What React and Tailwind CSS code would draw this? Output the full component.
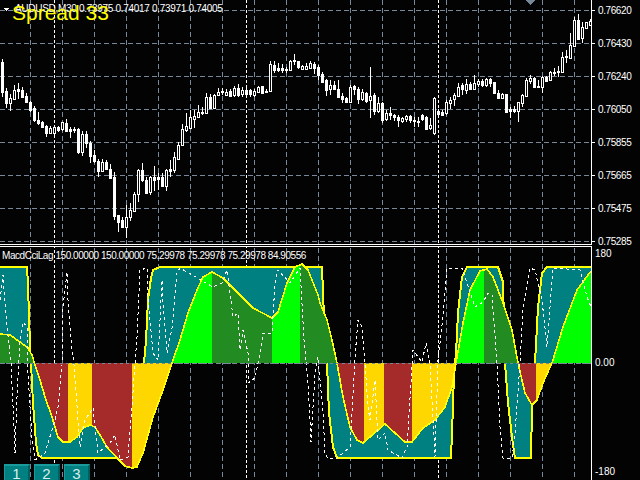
const GRID_X = [30, 62, 94, 126, 158, 190, 222, 254, 286, 318, 350, 382, 414, 446, 478, 510, 542, 574];
const GRID_Y = [10, 43, 76, 109, 142, 175, 208, 241];
const SEPARATORS = [54, 246, 438];

// [high, body top, body bottom, low, hollow] read at 3x from the reference
const CANDLES = [
  [178, 186, 276, 290, 0], [265, 272, 308, 325, 0], [282, 295, 308, 332, 1], [255, 270, 296, 298, 1],
  [250, 268, 272, 296, 0], [262, 270, 290, 292, 0], [280, 288, 306, 310, 0], [302, 306, 330, 335, 0],
  [318, 324, 360, 365, 0], [335, 360, 370, 375, 0], [362, 366, 380, 384, 0], [375, 378, 398, 412, 0],
  [378, 384, 400, 402, 1], [375, 381, 400, 412, 1], [378, 381, 390, 395, 0], [365, 367, 388, 392, 1],
  [357, 369, 392, 395, 0], [380, 388, 392, 414, 0], [380, 386, 390, 400, 0], [385, 387, 455, 462, 0],
  [392, 402, 455, 468, 1], [392, 402, 430, 445, 0], [422, 428, 468, 488, 0], [450, 465, 484, 490, 0],
  [476, 484, 514, 530, 0], [478, 486, 514, 515, 1], [480, 487, 507, 510, 0], [492, 507, 533, 535, 0],
  [515, 531, 648, 660, 0], [645, 646, 666, 695, 0], [650, 660, 682, 685, 0], [615, 650, 682, 713, 1],
  [610, 630, 652, 662, 1], [575, 582, 632, 634, 1], [508, 510, 582, 605, 1], [490, 510, 540, 545, 0],
  [530, 540, 578, 580, 0], [527, 530, 575, 585, 1], [498, 532, 540, 572, 0], [520, 532, 536, 570, 0],
  [520, 531, 557, 560, 0], [508, 511, 557, 572, 1], [480, 507, 513, 530, 0], [455, 472, 510, 518, 1],
  [425, 435, 478, 480, 1], [372, 388, 436, 438, 1], [338, 378, 390, 395, 1], [330, 351, 385, 388, 1],
  [330, 348, 356, 385, 1], [315, 337, 350, 352, 1], [320, 335, 340, 345, 0], [280, 291, 340, 342, 1],
  [282, 291, 325, 327, 0], [283, 285, 323, 325, 1], [265, 277, 284, 286, 1], [265, 272, 276, 285, 0],
  [268, 276, 284, 288, 1], [268, 273, 288, 292, 0], [258, 265, 285, 292, 1], [253, 264, 284, 290, 0],
  [262, 270, 282, 292, 1], [262, 271, 281, 292, 0], [267, 271, 283, 290, 0], [268, 274, 285, 290, 1],
  [258, 260, 275, 276, 1], [258, 259, 278, 280, 0], [268, 272, 277, 278, 0], [182, 193, 272, 274, 1],
  [182, 195, 210, 218, 0], [190, 205, 210, 215, 0], [192, 205, 209, 218, 0], [200, 207, 211, 220, 0],
  [180, 182, 210, 212, 1], [162, 181, 184, 195, 0], [182, 184, 202, 206, 0], [196, 198, 206, 208, 1],
  [190, 199, 206, 208, 1], [182, 190, 203, 206, 1], [185, 191, 203, 222, 0], [195, 200, 225, 240, 0],
  [215, 222, 245, 250, 0], [238, 240, 270, 288, 0], [240, 256, 268, 285, 1], [242, 256, 268, 270, 0],
  [240, 268, 290, 293, 0], [280, 288, 297, 308, 0], [290, 294, 305, 308, 0], [255, 262, 305, 308, 1],
  [255, 258, 268, 285, 0], [260, 268, 298, 312, 0], [268, 277, 298, 302, 1], [275, 278, 302, 308, 0],
  [202, 287, 300, 355, 1], [278, 286, 332, 345, 0], [290, 310, 332, 340, 1], [305, 310, 360, 368, 0],
  [330, 340, 358, 362, 1], [322, 340, 344, 360, 0], [342, 344, 352, 362, 0], [345, 352, 360, 380, 0],
  [350, 355, 362, 368, 1], [345, 348, 356, 365, 1], [345, 348, 360, 368, 0], [352, 360, 361, 382, 0],
  [352, 362, 364, 380, 0], [342, 344, 358, 362, 0], [348, 350, 387, 390, 0], [355, 376, 385, 390, 1],
  [292, 293, 398, 404, 1], [328, 332, 342, 350, 0], [330, 335, 345, 348, 0], [300, 306, 340, 345, 1],
  [292, 300, 308, 328, 1], [280, 286, 298, 318, 1], [248, 260, 288, 290, 1], [250, 255, 266, 285, 0],
  [238, 253, 270, 282, 1], [245, 252, 268, 270, 0], [226, 250, 266, 268, 1], [238, 244, 252, 260, 1],
  [238, 244, 256, 260, 0], [235, 238, 256, 260, 1], [235, 237, 248, 262, 0], [246, 247, 278, 282, 0],
  [270, 278, 293, 296, 0], [280, 283, 294, 298, 1], [282, 283, 335, 336, 0], [320, 327, 334, 355, 0],
  [318, 327, 332, 338, 0], [305, 307, 332, 365, 1], [282, 284, 308, 320, 1], [235, 240, 288, 290, 1],
  [225, 235, 242, 252, 1], [232, 234, 260, 262, 0], [240, 258, 262, 264, 0], [228, 230, 262, 278, 1],
  [228, 230, 242, 245, 0], [212, 217, 240, 242, 1], [205, 216, 220, 228, 0], [198, 214, 217, 230, 0],
  [155, 170, 217, 220, 1], [150, 168, 172, 188, 0], [100, 136, 174, 176, 1], [52, 60, 137, 140, 1],
  [42, 60, 116, 120, 0], [65, 82, 114, 130, 1], [65, 66, 84, 86, 1], [58, 62, 75, 78, 1],
];

const ZERO = 363;

const FAST = [
  [0, 267], [27, 267], [28, 285], [30, 345], [31, 363], [33, 403], [36, 443], [38, 455], [42, 458], [117, 458],
  [135, 458], [141, 420], [144, 363], [146, 340], [148, 300], [151, 278], [153, 270], [160, 267], [322, 267],
  [323, 293], [325, 340], [327, 363], [329, 413], [333, 447], [337, 458], [451, 458], [453, 407], [454, 373],
  [456, 353], [458, 313], [462, 277], [467, 267], [498, 267], [503, 282], [504, 320], [505, 363], [508, 403],
  [512, 437], [515, 458], [531, 458], [532, 407], [535, 363], [538, 307], [542, 273], [547, 267], [591, 267],
];

const SLOW = [
  [0, 334], [10, 335], [20, 342], [28, 348], [32, 355], [35, 365], [40, 380], [45, 397], [52, 417], [58, 437],
  [63, 442], [70, 442], [77, 437], [83, 428], [90, 425], [95, 427], [100, 435], [107, 447], [117, 458], [125, 466],
  [132, 468], [137, 467], [143, 453], [153, 417], [163, 390], [172, 363], [180, 340], [188, 313], [197, 290],
  [203, 277], [212, 272], [223, 278], [237, 292], [253, 308], [272, 318], [278, 312], [287, 283], [295, 267],
  [302, 264], [308, 270], [318, 295], [320, 303], [327, 320], [332, 340], [337, 363], [343, 397], [350, 427],
  [357, 440], [363, 443], [370, 437], [385, 424], [395, 433], [405, 442], [412, 442], [423, 428], [435, 420],
  [445, 407], [452, 387], [456, 363], [463, 323], [470, 290], [480, 271], [487, 269], [493, 277], [503, 303],
  [512, 330], [518, 363], [525, 393], [532, 405], [537, 400], [543, 383], [552, 363], [563, 327], [577, 290], [591, 271],
];

// colour of the slow histogram by bar range
const SLOW_BANDS = [
  [0, 34, "#228b22"], [34, 68, "#a52a2a"], [68, 92, "#ffd700"], [92, 132, "#a52a2a"], [132, 172, "#ffd700"],
  [172, 212, "#00ff00"], [212, 272, "#228b22"], [272, 300, "#00ff00"], [300, 337, "#228b22"], [337, 364, "#a52a2a"],
  [364, 384, "#ffd700"], [384, 412, "#a52a2a"], [412, 456, "#ffd700"], [456, 484, "#00ff00"], [484, 518, "#228b22"],
  [518, 536, "#a52a2a"], [536, 552, "#ffd700"], [552, 591, "#00ff00"],
];

const SIGNAL = [
  [0, 300], [3, 275], [5, 303], [7, 327], [11, 363], [14, 427], [15, 453], [17, 397], [20, 340], [23, 322],
  [27, 327], [28, 373], [32, 440], [35, 460], [45, 453], [55, 420], [58, 407], [62, 365], [63, 307], [67, 272],
  [68, 300], [72, 350], [74, 365], [80, 447], [85, 420], [87, 417], [93, 408], [98, 453], [110, 443], [115, 435],
  [120, 460], [128, 457], [132, 407], [135, 363], [137, 337], [140, 270], [147, 268], [148, 297], [153, 353],
  [158, 360], [162, 280], [163, 305], [167, 353], [172, 328], [177, 273], [180, 268], [213, 287], [222, 283],
  [227, 270], [233, 317], [238, 313], [240, 350], [243, 330], [248, 353], [248, 383], [255, 378], [260, 353],
  [263, 333], [272, 333], [275, 283], [278, 270], [290, 283], [300, 268], [304, 340], [308, 383], [311, 442],
  [315, 373], [318, 357], [320, 380], [323, 413], [325, 453], [328, 459], [337, 458], [350, 447], [355, 357],
  [358, 320], [362, 327], [365, 363], [368, 407], [370, 420], [375, 380], [378, 440], [385, 433], [388, 450],
  [402, 458], [407, 447], [413, 350], [422, 362], [426, 343], [430, 363], [435, 457], [438, 360], [443, 317],
  [447, 268], [462, 268], [475, 307], [483, 302], [488, 293], [492, 295], [497, 363], [500, 427], [503, 458],
  [512, 458], [515, 433], [520, 363], [523, 307], [530, 268], [535, 270], [542, 300], [547, 347], [553, 268],
  [580, 270], [587, 297], [591, 307],
];

const toPoints = (pts) => pts.map((p) => p.join(",")).join(" ");
const toArea = (pts) => `${pts[0][0]},${ZERO} ${toPoints(pts)} ${pts[pts.length - 1][0]},${ZERO}`;

function GridLines({ bottom, rows }) {
  return (
    <>
      {rows.map((y) => (
        <line key={y} x1="0" x2="591" y1={y + 0.5} y2={y + 0.5} stroke="#778899" strokeDasharray="5 3" />
      ))}
      {GRID_X.map((x) => (
        <line key={x} x1={x + 0.5} x2={x + 0.5} y1="0" y2={bottom} stroke="#778899" strokeDasharray="5 3" />
      ))}
      {SEPARATORS.map((x) => (
        <line key={x} x1={x + 0.5} x2={x + 0.5} y1="0" y2={bottom} stroke="#ffffff" strokeDasharray="3 2" />
      ))}
    </>
  );
}

function Candle({ candle, index }) {
  const [high, top, bottom, low, hollow] = candle.map((v, i) => (i < 4 ? Math.round(v / 3) : v));
  const x = 2 + index * 4;
  return (
    <g>
      <line x1={x + 0.5} x2={x + 0.5} y1={high} y2={low} stroke="#ffffff" />
      <rect
        x={x - 1 + 0.5}
        y={top + 0.5}
        width="2"
        height={Math.max(bottom - top, 1)}
        fill={hollow ? "#030303" : "#ffffff"}
        stroke="#ffffff"
      />
    </g>
  );
}

function PriceChart() {
  return (
    <svg width="591" height="244" viewBox="0 0 591 244" shapeRendering="crispEdges" className="block">
      <GridLines bottom={244} rows={GRID_Y} />
      {CANDLES.map((c, i) => (
        <Candle key={i} candle={c} index={i} />
      ))}
      <polygon points="525,0 535,0 530,5" fill="#778899" />
      <polygon points="3,8 9,8 6,11" fill="#ffffff" />
    </svg>
  );
}

function IndicatorChart() {
  return (
    <svg width="591" height="233" viewBox="0 247 591 233" shapeRendering="crispEdges" className="block">
      <defs>
        <clipPath id="slow-area">
          <polygon points={toArea(SLOW)} />
        </clipPath>
      </defs>
      <GridLines bottom={480} rows={[ZERO]} />
      <polygon points={toArea(FAST)} fill="#008080" />
      <polyline points={toPoints(FAST)} fill="none" stroke="#ffff00" strokeWidth="2" />
      <g clipPath="url(#slow-area)">
        {SLOW_BANDS.map(([from, to, color]) => (
          <rect key={from} x={from} y="247" width={to - from} height="233" fill={color} />
        ))}
      </g>
      <polyline points={toPoints(SLOW)} fill="none" stroke="#ffff00" strokeWidth="1.6" />
      <polyline points={toPoints(SIGNAL)} fill="none" stroke="#ffffff" strokeDasharray="3 3" />
      <line x1="0" x2="591" y1={ZERO + 0.5} y2={ZERO + 0.5} stroke="#778899" strokeDasharray="3 3" />
    </svg>
  );
}

function PriceLabel({ children }) {
  return (
    <div className="h-[33px] flex items-center gap-[3px]">
      <span className="w-[3px] h-px bg-white" />
      <span>{children}</span>
    </div>
  );
}

function ChartButton({ label }) {
  return (
    <div className="w-[26px] h-[16px] bg-[#008080] border-t-2 border-l border-r-2 border-t-[#1a9a9a] border-l-[#1a9a9a] border-r-[#005f5f] flex items-center justify-center text-[#d8eeee] text-[15px] leading-none">
      {label}
    </div>
  );
}

export default function App() {
  const prices = ["0.76620", "0.76430", "0.76240", "0.76050", "0.75855", "0.75665", "0.75475", "0.75285"];
  return (
    <div className="w-[640px] h-[480px] bg-[#030303] flex overflow-hidden text-white font-['Liberation_Sans',sans-serif]">
      <div className="w-[592px] flex flex-col">
        <div className="relative h-[244px] overflow-hidden border-r border-white">
          <PriceChart />
          <div className="absolute left-[15px] top-[2px] text-[10px] leading-[14px] tracking-[-0.3px] whitespace-nowrap">
            AUDUSD,M30 0.73975 0.74017 0.73971 0.74005
          </div>
          <div className="absolute left-[12px] top-[1px] text-[21px] leading-[24px] text-[#ffff00] whitespace-nowrap">
            Spread 33
          </div>
        </div>
        <div className="h-[3px] border-y border-white" />
        <div className="relative flex-1 overflow-hidden border-r border-white">
          <IndicatorChart />
          <div className="absolute left-[2px] top-[2px] text-[10px] leading-[14px] tracking-[-0.45px] whitespace-nowrap">
            MacdCciLag 150.00000 150.00000 75.29978 75.29978 75.29978 84.90556
          </div>
          <div className="absolute left-[4px] bottom-0 flex gap-[4px]">
            <ChartButton label="1" />
            <ChartButton label="2" />
            <ChartButton label="3" />
          </div>
        </div>
      </div>
      <div className="w-[48px] flex flex-col text-[10px] tracking-[-0.4px]">
        <div className="h-[253px] -mt-[6px] overflow-hidden leading-[14px]">
          {prices.map((p) => (
            <PriceLabel key={p}>{p}</PriceLabel>
          ))}
        </div>
        <div className="flex-1 flex flex-col justify-between pl-[3px] pb-px leading-[14px] tracking-normal">
          <div>180</div>
          <div>0.00</div>
          <div>-180</div>
        </div>
      </div>
    </div>
  );
}
